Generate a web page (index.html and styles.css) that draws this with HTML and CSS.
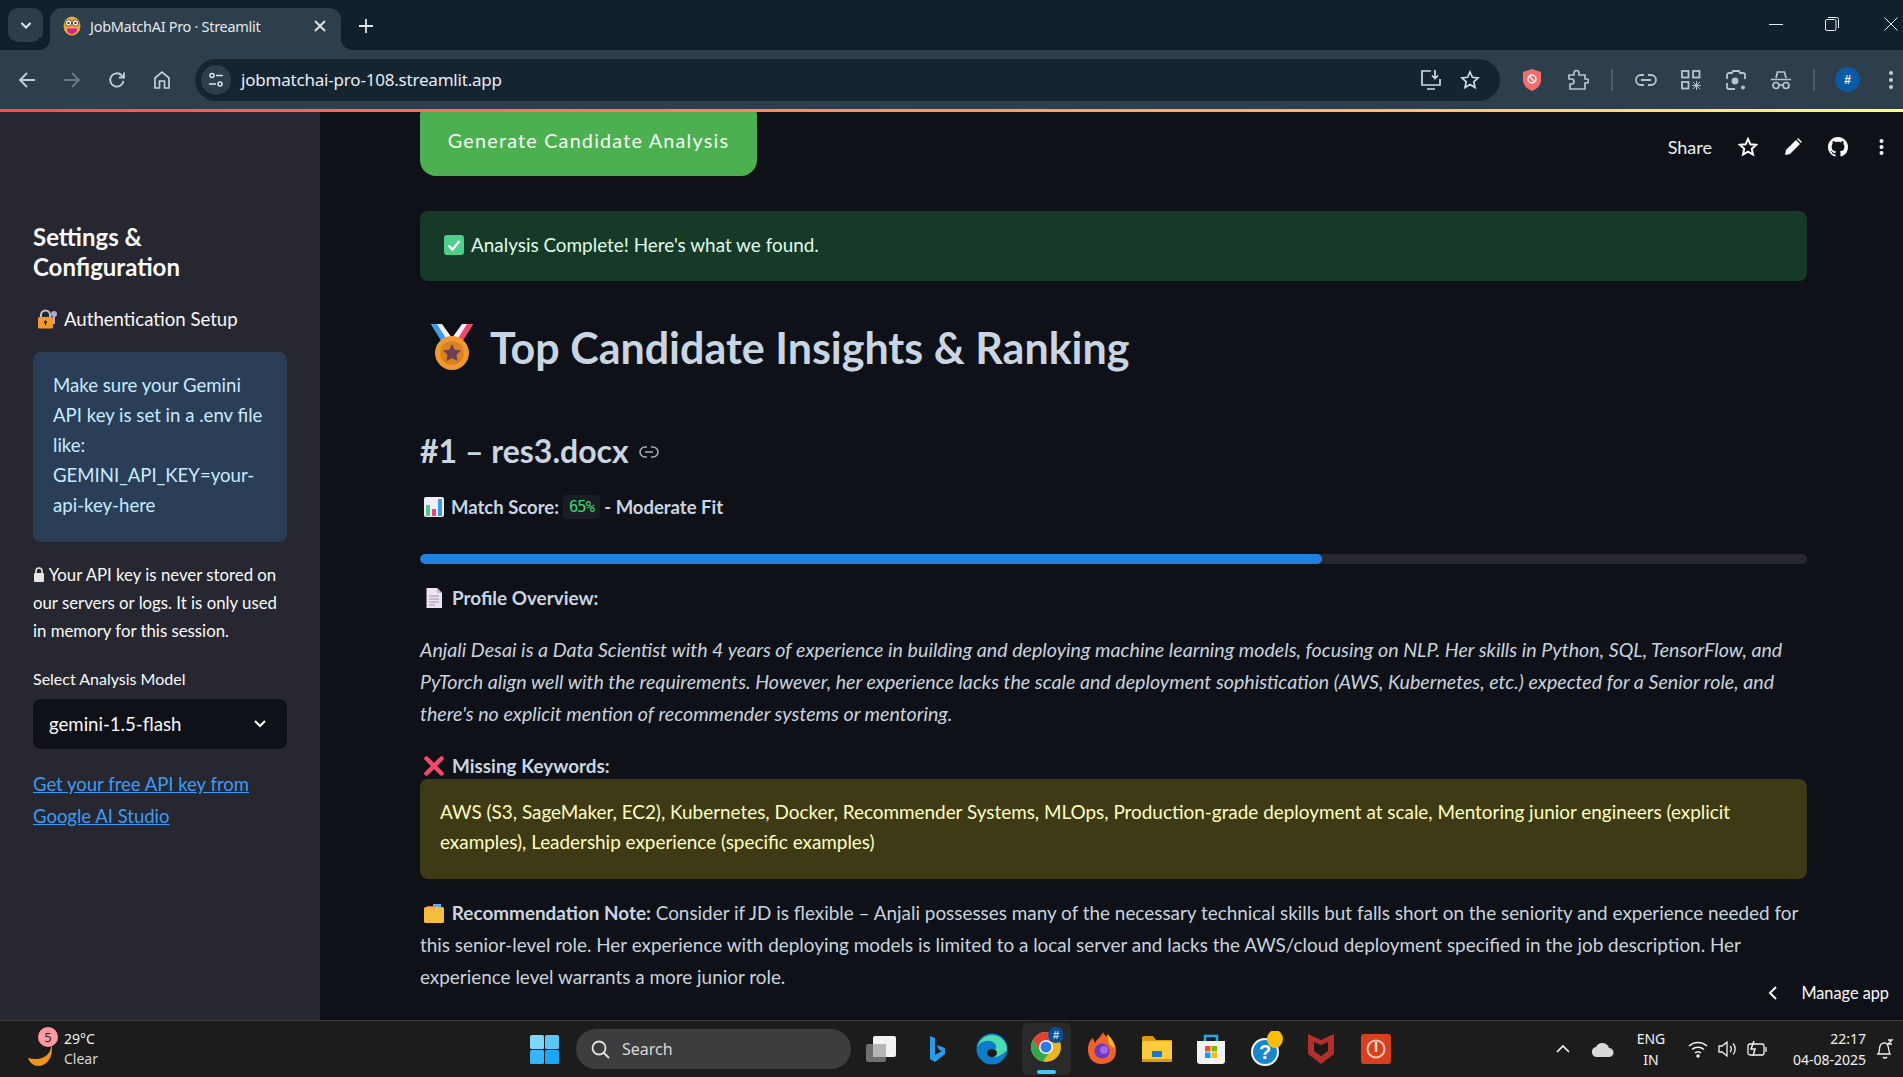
FILE: index.html
```html
<!DOCTYPE html>
<html lang="en">
<head>
  <meta charset="UTF-8">
  <title>JobMatchAI Pro · Streamlit</title>
  <link rel="stylesheet" href="styles.css">
</head>
<body>
<div class="screen">

  <!-- browser tab strip -->
  <div class="tabstrip">
    <div class="tab-list-btn">
      <svg width="16" height="16" viewBox="0 0 16 16" fill="none" stroke="#e3e8ec" stroke-width="2"><path d="M3.5 6l4.5 4.5L12.5 6"/></svg>
    </div>
    <div class="tab">
      <svg class="favicon" width="18" height="20" viewBox="0 0 18 20"><ellipse cx="9" cy="10" rx="8.5" ry="9.5" fill="#f0a83c"/><circle cx="5.5" cy="7" r="3.2" fill="#fff" stroke="#6b4a22"/><circle cx="12.5" cy="7" r="3.2" fill="#fff" stroke="#6b4a22"/><circle cx="5.5" cy="7" r="1.2" fill="#333"/><circle cx="12.5" cy="7" r="1.2" fill="#333"/><path d="M4 12.5h10c0 4-2.500 5.500-5 5.500s-5-1.500-5-5.500z" fill="#d81f9a"/></svg>
      <span class="tab-title">JobMatchAI Pro · Streamlit</span>
      <svg class="tab-close" width="12" height="12" viewBox="0 0 12 12" stroke="#e3e8ec" stroke-width="1.800"><path d="M1 1l10 10M11 1L1 11"/></svg>
    </div>
    <svg class="new-tab" width="14" height="14" viewBox="0 0 14 14" stroke="#e3e8ec" stroke-width="1.800"><path d="M7 0v14M0 7h14"/></svg>
    <div class="win-controls">
      <svg width="14" height="14" viewBox="0 0 14 14" stroke="#e8ecef" stroke-width="1"><path d="M0 7.500h14"/></svg>
      <svg width="14" height="14" viewBox="0 0 14 14" fill="none" stroke="#e8ecef" stroke-width="1"><rect x="0.500" y="2.500" width="10.500" height="11" rx="1.500"/><path d="M3 .5h8.500a2 2 0 0 1 2 2V11"/></svg>
      <svg class="win-close" width="14" height="14" viewBox="0 0 14 14" stroke="#e8ecef" stroke-width="1"><path d="M.5.5l13 13M13.500.5l-13 13"/></svg>
    </div>
  </div>

  <!-- browser toolbar -->
  <div class="toolbar">
    <div class="nav-icons">
      <svg width="18" height="18" viewBox="0 0 18 18" fill="none" stroke="#c6d0d8" stroke-width="1.800"><path d="M17 9H2M9 2L2 9l7 7"/></svg>
      <svg width="18" height="18" viewBox="0 0 18 18" fill="none" stroke="#6b7a86" stroke-width="1.800"><path d="M1 9h15M9 2l7 7-7 7"/></svg>
      <svg width="18" height="18" viewBox="0 0 18 18" fill="none" stroke="#c6d0d8" stroke-width="1.800"><path d="M15.500 10a6.700 6.700 0 1 1-1.800-5.700L16 6.500M16 1.500v5h-5"/></svg>
      <svg width="18" height="20" viewBox="0 0 18 20" fill="none" stroke="#c6d0d8" stroke-width="1.700"><path d="M2 8l7-6 7 6v10h-4.500v-7h-5v7H2z"/></svg>
    </div>
    <div class="omnibox">
      <div class="site-info">
        <svg width="16" height="16" viewBox="0 0 16 16" fill="none" stroke="#dfe5ea" stroke-width="1.500"><circle cx="4" cy="3.500" r="2"/><path d="M8 3.500h7M1 12h7"/><circle cx="12" cy="12" r="2"/></svg>
      </div>
      <span class="url">jobmatchai-pro-108.streamlit.app</span>
      <svg class="omni-install" width="22" height="22" viewBox="0 0 22 22" fill="none" stroke="#d3dae0" stroke-width="1.700"><path d="M11 2H2v14h18v-6M7 20h8"/><path d="M15 1v8M12 6.500l3 3 3-3"/></svg>
      <svg class="omni-star" width="20" height="20" viewBox="0 0 20 20" fill="none" stroke="#d3dae0" stroke-width="1.700"><path d="M10 2l2.400 5.300 5.700.6-4.300 3.900 1.200 5.700L10 14.600l-5 2.900 1.200-5.700L1.900 7.900l5.700-.6z"/></svg>
    </div>
    <div class="ext-icons">
      <svg class="ext-shield" width="20" height="22" viewBox="0 0 20 22"><path d="M10 0l9 3v8c0 5-4 9-9 11-5-2-9-6-9-11V3z" fill="#f26d6d"/><circle cx="10" cy="10" r="4" fill="none" stroke="#fff" stroke-width="1.300"/><path d="M7.500 7.500l5 5" stroke="#fff" stroke-width="1.300"/></svg>
      <svg class="ext-puzzle" width="22" height="22" viewBox="0 0 22 22" fill="none" stroke="#b9c5ce" stroke-width="1.700"><path d="M2 6h5V4a2.500 2.500 0 0 1 5 0v2h6v4h1.500a2 2 0 0 1 0 4H18v6H3v-5h1.500a2.500 2.500 0 0 0 0-5H2z"/></svg>
      <span class="ext-sep"></span>
      <svg class="ext-link" width="22" height="14" viewBox="0 0 22 14" fill="none" stroke="#b9c5ce" stroke-width="1.800"><path d="M9 2H6a5 5 0 0 0 0 10h3M13 2h3a5 5 0 0 1 0 10h-3M6 7h10"/></svg>
      <svg class="ext-qr" width="20" height="20" viewBox="0 0 20 20" fill="none" stroke="#b9c5ce" stroke-width="1.800"><rect x="1" y="1" width="6.500" height="6.500"/><rect x="12" y="1" width="6.500" height="6.500"/><rect x="1" y="12" width="6.500" height="6.500"/><path d="M12 12l7 7M19 12l-7 7M15.500 11v9M11 15.500h9" stroke-width="1"/></svg>
      <svg class="ext-lens" width="20" height="22" viewBox="0 0 20 22" fill="none" stroke="#b9c5ce" stroke-width="1.800"><path d="M1 10V6a2 2 0 0 1 2-2h3l1-2h6l1 2h3a2 2 0 0 1 2 2v4M1 14v4a2 2 0 0 0 2 2h6"/><circle cx="9" cy="12" r="2.500" fill="#b9c5ce"/><circle cx="17" cy="18.500" r="2" fill="#b9c5ce" stroke="none"/></svg>
      <svg class="ext-spy" width="20" height="20" viewBox="0 0 20 20" fill="none" stroke="#b9c5ce" stroke-width="1.700"><path d="M5 8l1.500-6h7L15 8M0 9.500h20"/><circle cx="5" cy="15.500" r="3"/><circle cx="15" cy="15.500" r="3"/><path d="M8 15h4"/></svg>
      <span class="ext-sep"></span>
      <span class="avatar">#</span>
      <svg class="ext-dots" width="6" height="20" viewBox="0 0 6 20" fill="#c6d0d8"><circle cx="3" cy="3" r="2"/><circle cx="3" cy="10" r="2"/><circle cx="3" cy="17" r="2"/></svg>
    </div>
  </div>
  <div class="rainbow"></div>

  <div class="app">
    <aside class="sidebar">
      <h2 class="side-title">Settings &amp; Configuration</h2>
      <div class="side-sub">
        <svg width="21" height="20" viewBox="0 0 21 20"><path d="M4 9V6a4.500 4.500 0 0 1 9 0v3" fill="none" stroke="#c2c2cc" stroke-width="2"/><rect x="1" y="8" width="15" height="11.500" rx="1.500" fill="#f29a2e"/><circle cx="8.500" cy="13" r="1.600" fill="#3a2a20"/><path d="M8 13h1v3.500H8z" fill="#3a2a20"/><circle cx="17" cy="5" r="3" fill="#b9a9c9"/><path d="M17 7v8" stroke="#b9a9c9" stroke-width="2"/></svg>
        <span>Authentication Setup</span>
      </div>
      <div class="side-info">Make sure your Gemini API key is set in a .env file like: GEMINI_API_KEY=your-api-key-here</div>
      <p class="side-note"><svg width="12" height="17" viewBox="0 0 12 17"><path d="M3 8V5a3 3 0 0 1 6 0v3" fill="none" stroke="#e6e6e6" stroke-width="1.600"/><rect x="1" y="7" width="10" height="9" rx="1" fill="#e6e6e6"/></svg> Your API key is never stored on our servers or logs. It is only used in memory for this session.</p>
      <div class="side-label">Select Analysis Model</div>
      <div class="side-select">
        <span>gemini-1.5-flash</span>
        <svg width="14" height="10" viewBox="0 0 14 10" fill="none" stroke="#fafafa" stroke-width="2"><path d="M2 2l5 5 5-5"/></svg>
      </div>
      <a class="side-link" href="#">Get your free API key from Google AI Studio</a>
    </aside>

    <main class="content">
      <button class="generate-btn">Generate Candidate Analysis</button>
      <div class="success-box">
        <svg width="20" height="20" viewBox="0 0 20 20"><rect width="20" height="20" rx="3" fill="#4fcf8b"/><path d="M4.500 10.500l4 4 7-8.500" fill="none" stroke="#fff" stroke-width="2.400"/></svg>
        <span>Analysis Complete! Here's what we found.</span>
      </div>
      <h1 class="page-title">
        <svg width="46" height="48" viewBox="0 0 46 48"><path d="M2 1h11l10 14L33 1h11L30 23H16z" fill="#f4f0fa"/><path d="M2 1h6l10 16-4 4z" fill="#3d9cf0"/><path d="M44 1h-6L28 17l4 4z" fill="#f2426e"/><circle cx="23" cy="30" r="17" fill="#ee9a33"/><circle cx="23" cy="30" r="12" fill="#d98220"/><path d="M23 21l2.800 5.800 6.200.8-4.500 4.300 1.100 6.200-5.600-3-5.600 3 1.100-6.200-4.500-4.300 6.200-.8z" fill="#6e3d56"/></svg>
        <span>Top Candidate Insights &amp; Ranking</span>
      </h1>
      <h3 class="candidate-name">#1 – res3.docx
        <svg width="20" height="12" viewBox="0 0 20 12" fill="none" stroke="#a9adb3" stroke-width="1.600"><path d="M8 1H6a5 5 0 0 0 0 10h2M12 1h2a5 5 0 0 1 0 10h-2M6 6h8"/></svg>
      </h3>
      <div class="score-line">
        <svg class="line-icon" width="20" height="20" viewBox="0 0 20 20"><rect width="20" height="20" rx="2" fill="#eef0f5"/><rect x="2" y="8" width="4" height="11" fill="#4fc88a"/><rect x="8" y="12" width="4" height="7" fill="#f0427f"/><rect x="14" y="2" width="4" height="17" fill="#3b9ae8"/></svg>
        <b>Match Score:</b> <code class="score-badge">65%</code> <b>- Moderate Fit</b>
      </div>
      <div class="progress"><div class="progress-fill"></div></div>
      <div class="label-line">
        <svg class="line-icon" width="20" height="20" viewBox="0 0 20 20"><path d="M2.500 0H13l5 5v15H2.500z" fill="#eee3f2"/><path d="M13 0l5 5h-5z" fill="#c9b9d4"/><path d="M5 8h10M5 11h10M5 14h10M5 17h6" stroke="#9a90a6" stroke-width="1"/></svg>
        <b>Profile Overview:</b>
      </div>
      <p class="overview">Anjali Desai is a Data Scientist with 4 years of experience in building and deploying machine learning models, focusing on NLP. Her skills in Python, SQL, TensorFlow, and PyTorch align well with the requirements. However, her experience lacks the scale and deployment sophistication (AWS, Kubernetes, etc.) expected for a Senior role, and there's no explicit mention of recommender systems or mentoring.</p>
      <div class="label-line missing-line">
        <svg class="line-icon" width="20" height="20" viewBox="0 0 20 20" stroke="#f2476f" stroke-width="4.500" stroke-linecap="round"><path d="M2.500 2.500l15 15M17.500 2.500l-15 15"/></svg>
        <b>Missing Keywords:</b>
      </div>
      <div class="missing-box">AWS (S3, SageMaker, EC2), Kubernetes, Docker, Recommender Systems, MLOps, Production-grade deployment at scale, Mentoring junior engineers (explicit examples), Leadership experience (specific examples)</div>
      <p class="rec-note">
        <svg class="line-icon" width="20" height="19" viewBox="0 0 20 19"><rect x="9" y="0" width="8" height="5" fill="#5ab4e8"/><rect x="3" y="2" width="8" height="4" fill="#e86a5a"/><rect y="3" width="20" height="16" rx="1.500" fill="#f5bd3e"/></svg>
        <b>Recommendation Note:</b> Consider if JD is flexible – Anjali possesses many of the necessary technical skills but falls short on the seniority and experience needed for this senior-level role. Her experience with deploying models is limited to a local server and lacks the AWS/cloud deployment specified in the job description. Her experience level warrants a more junior role.
      </p>

      <!-- streamlit header floats over the page -->
      <div class="st-toolbar">
        <span class="st-share">Share</span>
        <svg width="20" height="20" viewBox="0 0 20 20" fill="none" stroke="#fafafa" stroke-width="2"><path d="M10 2l2.400 5.300 5.700.6-4.300 3.900 1.200 5.700L10 14.600l-5 2.900 1.200-5.700L1.900 7.900l5.700-.6z"/></svg>
        <svg width="18" height="18" viewBox="0 0 18 18" fill="#fafafa"><path d="M1 17l1-5L12 2l4 4L6 16z"/><path d="M13 1l1-1 4 4-1 1z"/></svg>
        <svg width="20" height="20" viewBox="0 0 16 16" fill="#fafafa"><path d="M8 0C3.580 0 0 3.580 0 8c0 3.540 2.290 6.530 5.470 7.590.4.070.55-.17.55-.38 0-.19-.01-.82-.01-1.490-2.010.37-2.530-.49-2.690-.94-.09-.23-.48-.94-.82-1.130-.28-.15-.68-.52-.01-.53.630-.01 1.080.58 1.230.82.720 1.210 1.870.87 2.330.66.070-.52.280-.87.510-1.070-1.780-.2-3.640-.89-3.640-3.950 0-.87.310-1.590.82-2.150-.08-.2-.36-1.020.08-2.120 0 0 .67-.21 2.200.82.640-.18 1.320-.27 2-.27s1.360.09 2 .27c1.530-1.040 2.200-.82 2.200-.82.440 1.100.16 1.920.08 2.120.51.560.82 1.270.82 2.150 0 3.070-1.870 3.750-3.650 3.950.29.250.54.730.54 1.480 0 1.070-.01 1.930-.01 2.200 0 .21.150.46.550.38A8.010 8.010 0 0 0 16 8c0-4.420-3.580-8-8-8z"/></svg>
        <svg class="st-dots" width="5" height="18" viewBox="0 0 5 18" fill="#fafafa"><circle cx="2.500" cy="3" r="2"/><circle cx="2.500" cy="9" r="2"/><circle cx="2.500" cy="15" r="2"/></svg>
      </div>
      <div class="manage-app">
        <svg width="10" height="14" viewBox="0 0 10 14" fill="none" stroke="#fafafa" stroke-width="2"><path d="M8 1L2 7l6 6"/></svg>
        <span>Manage app</span>
      </div>
    </main>
  </div>

  <!-- windows taskbar -->
  <footer class="taskbar">
    <div class="weather">
      <svg class="moon" width="30" height="28" viewBox="0 0 30 28"><path d="M25 2c2 12-8 20-23 16 3 8 10 9 15 7 7-3 11-12 8-23z" fill="#f0951c"/></svg>
      <span class="weather-badge">5</span>
      <div class="weather-text"><span>29°C</span><span class="weather-sub">Clear</span></div>
    </div>
    <div class="task-center">
      <svg width="29" height="29" viewBox="0 0 29 29"><rect width="14" height="14" rx="1.500" fill="#7fd6fb"/><rect x="15" width="14" height="14" rx="1.500" fill="#5cc5f7"/><rect y="15" width="14" height="14" rx="1.500" fill="#36b6f7"/><rect x="15" y="15" width="14" height="14" rx="1.500" fill="#1aa5f5"/></svg>
      <div class="task-search">
        <svg width="19" height="19" viewBox="0 0 19 19" fill="none" stroke="#e4e4e4" stroke-width="1.800"><circle cx="8" cy="8" r="6.500"/><path d="M12.500 12.500L18 18"/></svg>
        <span>Search</span>
      </div>
      <svg class="tb-view" width="30" height="26" viewBox="0 0 30 26"><rect x="0" y="8" width="20" height="18" rx="2" fill="#6e6e6e"/><rect x="7" y="0" width="23" height="21" rx="2" fill="#f2f2f2"/><rect x="7" y="8" width="13" height="13" fill="#b5b5b5"/></svg>
      <svg class="tb-bing" width="16" height="28" viewBox="0 0 16 28"><path d="M1 1l5 2v17l7-4-3-1-2-5 8 3v6L6 27l-5-3z" fill="#2a9be8"/></svg>
      <svg class="tb-edge" width="32" height="32" viewBox="0 0 32 32"><circle cx="16" cy="16" r="15.500" fill="#0f7cc8"/><path d="M31 17c0-9-7-15-15-15C9 2 3 7 1 14c3-5 8-7 13-6 5 1 7 5 6 8-4 0-6 3-4 6s7 3 15-5z" fill="#4ddbb0"/><ellipse cx="16" cy="20" rx="5" ry="4" fill="#1a1a1a"/></svg>
      <div class="tb-active">
        <svg width="32" height="36" viewBox="0 0 32 36"><circle cx="15" cy="20" r="15" fill="#e8b622"/><path d="M15 5a15 15 0 0 0-13 7.500L9 24l6-9h13A15 15 0 0 0 15 5z" fill="#e34133"/><path d="M2 12.500a15 15 0 0 0 10 22L19 24 9 24z" fill="#2fa84f"/><circle cx="15" cy="20" r="7" fill="#fff"/><circle cx="15" cy="20" r="5.500" fill="#2a7be8"/><circle cx="25" cy="8" r="8" fill="#0a4f96"/><text x="25" y="12" text-anchor="middle" class="tb-hash">#</text></svg>
        <span class="tb-active-bar"></span>
      </div>
      <svg class="tb-fox" width="30" height="34" viewBox="0 0 30 34"><path d="M15 32C6 32 1 26 1 18 1 12 3 8 6 6l2 5c2-4 6-6 8-11 1 3 3 4 5 5 5 3 8 8 8 14 0 8-6 13-14 13z" fill="#f0622a"/><path d="M20 2c4 3 8 9 8 15l-6-5z" fill="#fbb330"/><circle cx="15" cy="19" r="7.500" fill="#6a37c4"/><circle cx="17" cy="18" r="4" fill="#a565e0"/></svg>
      <svg class="tb-folder" width="30" height="26" viewBox="0 0 30 26"><path d="M0 2a2 2 0 0 1 2-2h9l3 4h16v4H0z" fill="#d99a12"/><rect y="5" width="30" height="21" rx="1.500" fill="#fbcb3c"/><rect x="10" y="15" width="10" height="6" rx="1" fill="#1877c9"/><rect y="23" width="30" height="3" fill="#d99a12"/></svg>
      <svg class="tb-store" width="30" height="30" viewBox="0 0 30 30"><path d="M9 7V2h12v5" fill="none" stroke="#2ba7e8" stroke-width="2.500"/><path d="M1 7h28v20a3 3 0 0 1-3 3H4a3 3 0 0 1-3-3z" fill="#f2f2f2"/><rect x="9" y="12" width="5.500" height="5.500" fill="#f25022"/><rect x="15.500" y="12" width="5.500" height="5.500" fill="#7fba00"/><rect x="9" y="18.500" width="5.500" height="5.500" fill="#00a4ef"/><rect x="15.500" y="18.500" width="5.500" height="5.500" fill="#ffb900"/></svg>
      <svg class="tb-help" width="32" height="36" viewBox="0 0 32 36"><circle cx="14" cy="21" r="14" fill="#f4f4f4"/><circle cx="14" cy="21" r="12" fill="#1788c9"/><text x="14" y="28" text-anchor="middle" class="tb-qmark">?</text><ellipse cx="24" cy="8" rx="8" ry="9" fill="#fdbb0a"/></svg>
      <svg class="tb-mcafee" width="26" height="30" viewBox="0 0 26 30"><path d="M0 0l13 6 13-6v20L13 30 0 20z" fill="#b2302b"/><path d="M6 8l7 3 7-3v9l-7 5-7-5z" fill="#1a1a1a"/></svg>
      <svg class="tb-power" width="30" height="30" viewBox="0 0 30 30"><rect width="30" height="30" rx="3" fill="#d7401f"/><circle cx="15" cy="15" r="8.500" fill="none" stroke="#f8c7b8" stroke-width="2"/><path d="M15 8v10" stroke="#f8e0d8" stroke-width="2.500"/></svg>
    </div>
    <div class="tray">
      <svg class="tray-chev" width="14" height="10" viewBox="0 0 14 10" fill="none" stroke="#f2f2f2" stroke-width="1.700"><path d="M1 8l6-6 6 6"/></svg>
      <svg class="tray-cloud" width="22" height="16" viewBox="0 0 22 16" fill="#d8d8d8"><path d="M5 16a5 5 0 0 1-1-9.900A7 7 0 0 1 17 7a4.500 4.500 0 0 1 0 9z"/></svg>
      <div class="tray-lang"><span>ENG</span><span>IN</span></div>
      <svg class="tray-wifi" width="20" height="18" viewBox="0 0 20 18" fill="none" stroke="#f2f2f2" stroke-width="1.500"><path d="M1 6a13 13 0 0 1 18 0M4 9.500a9 9 0 0 1 12 0M7 13a4.500 4.500 0 0 1 6 0"/><circle cx="10" cy="16" r="1" fill="#f2f2f2"/></svg>
      <svg class="tray-vol" width="20" height="18" viewBox="0 0 20 18" fill="none" stroke="#f2f2f2" stroke-width="1.300"><path d="M1 6h3l5-4v14l-5-4H1zM12 6a4 4 0 0 1 0 6M15 3.500a8 8 0 0 1 0 11"/></svg>
      <svg class="tray-bat" width="22" height="18" viewBox="0 0 22 18" fill="none" stroke="#f2f2f2" stroke-width="1.300"><rect x="1" y="4" width="16" height="11" rx="2"/><path d="M19 7v5"/><path d="M7 1L4 9h4l-2 7" stroke-width="1.500"/></svg>
      <div class="tray-clock"><span>22:17</span><span>04-08-2025</span></div>
      <svg class="tray-bell" width="18" height="22" viewBox="0 0 18 22" fill="none" stroke="#f2f2f2" stroke-width="1.300"><path d="M2 16c2-2 1-5 2-8s5-4 7-2c2 2 1 6 3 10zM7 19a2.500 2.500 0 0 0 4 0M12 2h4l-4 4h4"/></svg>
    </div>
  </footer>
</div>
</body>
</html>
```

FILE: styles.css
```css
* {
  box-sizing: border-box;
}
body {
  margin: 0;
  background-color: #0e1117;
  font-family: "Lato", "Noto Sans", sans-serif;
  color: #fafafa;
}
svg {
  display: block;
  flex-shrink: 0;
}
.screen {
  width: 1903px;
  height: 1077px;
  display: flex;
  flex-direction: column;
  overflow: hidden;
}

/* tab strip */
.tabstrip {
  height: 50px;
  background-color: #11202d;
  display: flex;
  align-items: flex-end;
  padding-left: 8px;
  flex-shrink: 0;
}
.tab-list-btn {
  width: 35px;
  height: 34px;
  margin-bottom: 8px;
  background-color: #2c3e4c;
  border-radius: 10px;
  display: flex;
  align-items: center;
  justify-content: center;
}
.tab {
  position: relative;
  width: 291px;
  height: 42px;
  margin-left: 7px;
  background-color: #2d3e4c;
  border-radius: 12px 12px 0 0;
  display: flex;
  align-items: center;
  padding: 0 14px 6px 13px;
  font-family: "Noto Sans", sans-serif;
  font-size: 14.500px;
  color: #e3e8ec;
}
.tab::before,
.tab::after {
  content: "";
  position: absolute;
  bottom: 0;
  width: 12px;
  height: 12px;
}
.tab::before {
  left: -12px;
  background: radial-gradient(circle at 0 0, #11202d 12px, #2d3e4c 12.500px);
}
.tab::after {
  right: -12px;
  background: radial-gradient(circle at 100% 0, #11202d 12px, #2d3e4c 12.500px);
}
.tab-title {
  margin-left: 9px;
  letter-spacing: -0.300px;
  white-space: nowrap;
}
.tab-close {
  margin-left: auto;
  margin-right: 1px;
}
.new-tab {
  margin: 0 0 17px 18px;
}
.win-controls {
  margin-left: auto;
  display: flex;
  gap: 42px;
  align-self: flex-start;
  margin-top: 17px;
  padding-right: 5px;
}
.win-close {
  margin-left: 3px;
}

/* toolbar */
.toolbar {
  height: 59px;
  background-color: #2d3e4c;
  display: flex;
  align-items: center;
  flex-shrink: 0;
}
.nav-icons {
  display: flex;
  align-items: center;
  gap: 27px;
  padding-left: 18px;
  width: 195px;
}
.omnibox {
  width: 1305px;
  height: 42px;
  background-color: #152431;
  border-radius: 21px;
  display: flex;
  align-items: center;
  padding-left: 6px;
}
.site-info {
  width: 30px;
  height: 30px;
  border-radius: 50%;
  background-color: #2d3e4c;
  display: flex;
  align-items: center;
  justify-content: center;
}
.url {
  margin-left: 10px;
  font-family: "Noto Sans", sans-serif;
  font-size: 17px;
  letter-spacing: -0.200px;
  color: #e8edf1;
}
.omni-install {
  margin-left: auto;
}
.omni-star {
  margin: 0 20px 0 18px;
}
.ext-icons {
  display: flex;
  align-items: center;
  flex: 1;
}
.ext-shield {
  margin-left: 22px;
}
.ext-puzzle {
  margin-left: 25px;
}
.ext-sep {
  width: 2px;
  height: 22px;
  background-color: #4b5c69;
}
.ext-icons .ext-sep {
  margin-left: 22px;
}
.ext-link {
  margin-left: 22px;
}
.ext-qr {
  margin-left: 24px;
}
.ext-lens {
  margin-left: 25px;
}
.ext-spy {
  margin-left: 25px;
}
.avatar {
  width: 25px;
  height: 25px;
  margin-left: 20px;
  border-radius: 50%;
  background-color: #0a5aa5;
  color: #fff;
  font: bold 12px "Liberation Sans", sans-serif;
  display: flex;
  align-items: center;
  justify-content: center;
}
.ext-dots {
  margin-left: 28px;
}
.rainbow {
  height: 3px;
  flex-shrink: 0;
  background: linear-gradient(90deg, #ff4b4b, #ffb36b 70%, #fffd80);
}

/* streamlit app */
.app {
  flex: 1;
  display: flex;
  min-height: 0;
}
.sidebar {
  width: 320px;
  background-color: #262730;
  padding: 110px 33px 0;
  flex-shrink: 0;
  font-size: 18.600px;
}
.side-title {
  margin: 0;
  font-size: 24px;
  line-height: 30px;
  font-weight: 700;
}
.side-sub {
  display: flex;
  align-items: center;
  gap: 6px;
  margin: 22px 0 0 4px;
  line-height: 30px;
}
.side-info {
  margin-top: 18px;
  padding: 18px 20px;
  height: 190px;
  background-color: #2a3e57;
  border-radius: 8px;
  color: #c7ebff;
  line-height: 30px;
}
.side-note {
  margin: 19px 0 0;
  font-size: 16.800px;
  line-height: 28px;
}
.side-note svg {
  display: inline-block;
  vertical-align: -2px;
}
.side-label {
  margin-top: 22px;
  font-size: 16px;
  line-height: 24px;
}
.side-select {
  margin-top: 8px;
  height: 50px;
  background-color: #0e1117;
  border-radius: 8px;
  display: flex;
  align-items: center;
  justify-content: space-between;
  padding: 0 20px 0 16px;
}
.side-link {
  display: block;
  margin-top: 19px;
  font-size: 18.500px;
  color: #3f9cf5;
  line-height: 32px;
}

.content {
  flex: 1;
  position: relative;
  padding: 0 96px 0 100px;
  font-size: 18.900px;
  color: #c9d3de;
  overflow: hidden;
  min-width: 0;
}
.generate-btn {
  display: block;
  width: 337px;
  height: 76px;
  margin-top: -12px;
  padding: 3px 0 0;
  border: none;
  border-radius: 16px;
  background-color: #4caf50;
  color: #f3fff3;
  font-family: inherit;
  font-size: 19.800px;
  letter-spacing: 1.200px;
}
.success-box {
  margin-top: 35px;
  height: 70px;
  padding: 0 0 3px 24px;
  background-color: #173928;
  border-radius: 8px;
  display: flex;
  align-items: center;
  gap: 7px;
  color: #dffde9;
}
.page-title {
  margin: 37px 0 0;
  height: 60px;
  display: flex;
  align-items: center;
  gap: 15px;
  padding: 0 0 2px 9px;
  font-size: 43px;
  font-weight: 700;
  color: #c9d6e2;
}
.candidate-name {
  margin: 51px 0 0;
  height: 44px;
  padding-bottom: 2px;
  display: flex;
  align-items: center;
  gap: 10px;
  font-size: 32px;
  font-weight: 700;
  color: #c9d6e2;
}
.candidate-name svg {
  margin-top: 4px;
}
.score-line,
.label-line {
  display: flex;
  align-items: center;
  gap: 5px;
  line-height: 30px;
  color: #c9d6e2;
}
.score-line {
  margin-top: 19px;
  font-size: 18.500px;
  gap: 4px;
}
.line-icon {
  margin: 0 3px 0 4px;
}
.rec-note .line-icon {
  display: inline-block;
  vertical-align: -3px;
}
.score-badge {
  margin: 0;
  padding: 2px 6px;
  background-color: #1a1d24;
  border-radius: 4px;
  font: 15.500px/20px "DejaVu Sans Mono", monospace;
  letter-spacing: -0.900px;
  color: #3dd56d;
}
.progress {
  margin-top: 32px;
  height: 10px;
  background-color: #262730;
  border-radius: 5px;
  overflow: hidden;
}
.progress-fill {
  width: 65%;
  height: 100%;
  background-color: #1f82e0;
  border-radius: 5px;
}
.label-line {
  margin-top: 19px;
}
.overview {
  margin: 21px 0 0;
  font-size: 19.650px;
  font-style: italic;
  line-height: 32px;
}
.missing-line {
  margin-top: 22px;
  line-height: 27px;
}
.missing-box {
  height: 100px;
  padding: 18px 20px;
  background-color: #3e3a16;
  border-radius: 8px;
  color: #ffffc2;
  line-height: 30px;
}
.rec-note {
  margin: 18px 0 0;
  line-height: 32px;
}
.rec-note b {
  color: #c9d6e2;
}
.st-toolbar {
  position: absolute;
  top: 0;
  right: 19px;
  height: 70px;
  display: flex;
  align-items: center;
  gap: 26px;
  color: #eceff2;
  font-size: 18px;
}
.st-dots {
  margin-left: 5px;
}
.manage-app {
  position: absolute;
  right: 14px;
  bottom: 18px;
  display: flex;
  align-items: center;
  gap: 23px;
  font-size: 16.300px;
  color: #fafafa;
}

/* taskbar */
.taskbar {
  height: 57px;
  flex-shrink: 0;
  background-color: #1c1c1c;
  border-top: 1px solid #3b3b3b;
  display: flex;
  position: relative;
  align-items: center;
  font-family: "Noto Sans", sans-serif;
  color: #f2f2f2;
}
.weather {
  position: relative;
  display: flex;
  align-items: center;
  width: 530px;
  padding-left: 26px;
  font-size: 14px;
}
.moon {
  margin-top: 10px;
}
.weather-badge {
  position: absolute;
  left: 38px;
  top: -2px;
  width: 20px;
  height: 20px;
  border-radius: 50%;
  background-color: #ff9aa2;
  color: #222;
  font-size: 13px;
  line-height: 20px;
  text-align: center;
}
.weather-text {
  display: flex;
  flex-direction: column;
  margin-left: 8px;
  line-height: 20px;
}
.weather-sub {
  color: #d6d6d6;
}
.task-center {
  display: flex;
  align-items: center;
  flex-shrink: 0;
}
.task-search {
  width: 275px;
  height: 40px;
  margin-left: 17px;
  background-color: #3d3d3d;
  border-radius: 20px;
  display: flex;
  align-items: center;
  gap: 12px;
  padding-left: 15px;
  font-size: 16px;
  color: #d8d8d8;
}
.tb-view {
  margin-left: 15px;
}
.tb-bing {
  margin-left: 33px;
}
.tb-edge {
  margin-left: 31px;
}
.tb-active {
  width: 49px;
  height: 52px;
  margin-left: 14px;
  background-color: #2a2a2a;
  border-radius: 6px;
  display: flex;
  justify-content: center;
  padding-top: 4px;
  position: relative;
}
.tb-active-bar {
  position: absolute;
  left: 15px;
  bottom: 1px;
  width: 19px;
  height: 4px;
  background-color: #4cc2ff;
  border-radius: 2px;
}
.tb-hash {
  fill: #cfe0f0;
  font: bold 11px "Liberation Sans", sans-serif;
}
.tb-qmark {
  fill: #fff;
  font: bold 20px "Liberation Sans", sans-serif;
}
.tb-fox {
  margin-left: 16px;
}
.tb-folder {
  margin-left: 25px;
}
.tb-store {
  margin-left: 24px;
}
.tb-help {
  margin-left: 25px;
}
.tb-mcafee {
  margin-left: 25px;
}
.tb-power {
  margin-left: 27px;
}
.tray {
  margin-left: auto;
  display: flex;
  align-items: center;
  padding-right: 9px;
  font-size: 14px;
}
.tray-cloud {
  margin-left: 22px;
}
.tray-lang {
  width: 40px;
  margin-left: 17px;
  display: flex;
  flex-direction: column;
  align-items: center;
  line-height: 21px;
}
.tray-wifi {
  margin-left: 17px;
}
.tray-vol {
  margin-left: 10px;
}
.tray-bat {
  margin-left: 9px;
}
.tray-clock {
  width: 97px;
  display: flex;
  flex-direction: column;
  align-items: flex-end;
  line-height: 21px;
}
.tray-bell {
  margin-left: 10px;
}
```
